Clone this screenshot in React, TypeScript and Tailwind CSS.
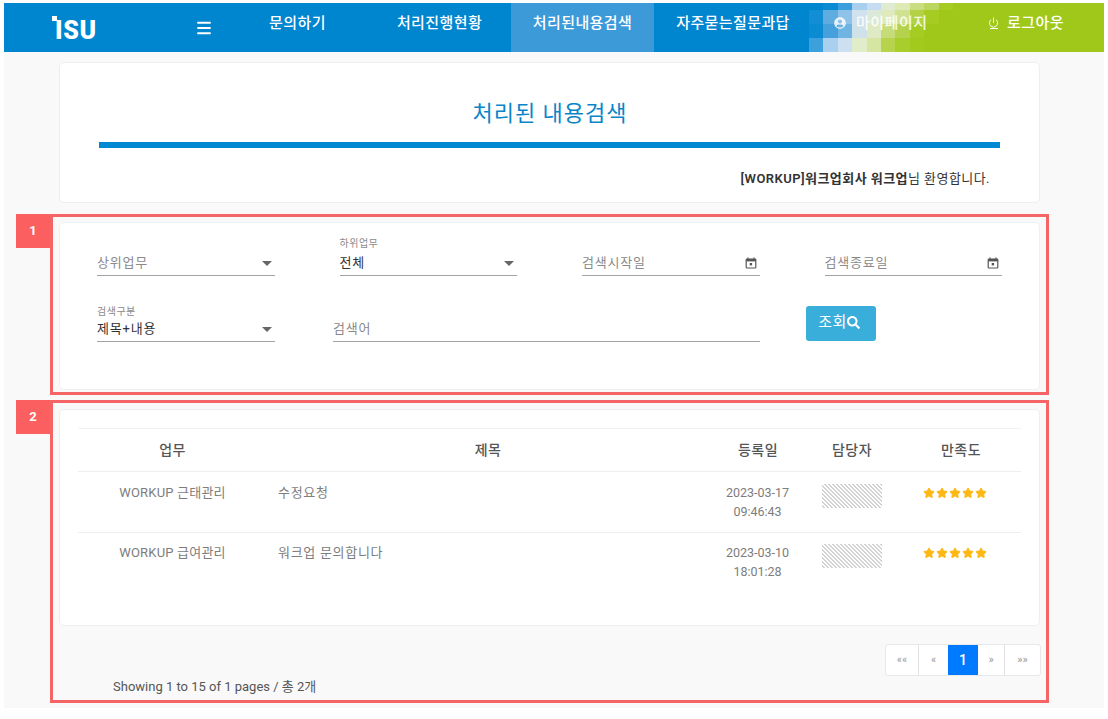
import { Menu, Power, Star } from "lucide-react";
import { FaSearch, FaUserCircle } from "react-icons/fa";

const navItems = ["문의하기", "처리진행현황", "처리된내용검색", "자주묻는질문과답"];
const navWidths = ["w-[141px]", "w-[143px]", "w-[143px]", "w-[158px]"];

// one row per line of the blue-to-green mosaic behind the menu's right end
const mosaic: string[][] = [
  ["#0085cf", "#0a8bd2", "#3a9fdc", "#a9cfee", "#c6dcf2", "#e0ecd0", "#dfe9b6", "#c9de80", "#bcd660", "#a6cc24", "#a0c81a"],
  ["#118ed4", "#5fade0", "#8fc2e8", "#cfe2ee", "#dce9d8", "#dfeabc", "#d0e290", "#b2d144", "#a6cc24", "#a0c81a", "#a0c81a"],
  ["#0a8bd2", "#46a0dc", "#6fb5e4", "#cfe2ea", "#dfe9c4", "#c6dc78", "#b5d24c", "#a5cc22", "#a0c81a", "#a0c81a", "#a0c81a"],
  ["#3ba0dc", "#a9d0ee", "#cde0f2", "#e1ecc8", "#d6e6a2", "#b6d34c", "#a8ce2c", "#a2ca1e", "#a0c81a", "#a0c81a", "#a0c81a"],
];

function CalendarIcon() {
  return (
    <svg viewBox="0 0 12 12" className="mb-[3px] mr-[3px] h-[12px] w-[12px] text-[#555]" fill="none">
      <path d="M3 0.5v2M9 0.5v2" stroke="currentColor" strokeWidth="1.2" />
      <rect x="1.2" y="2" width="9.6" height="9" rx="0.8" stroke="currentColor" strokeWidth="1.2" />
      <rect x="1.2" y="2" width="9.6" height="2.4" fill="currentColor" />
      <rect x="4.7" y="6" width="2.4" height="2.4" fill="currentColor" />
    </svg>
  );
}

function Field({
  label,
  value,
  icon,
  className,
}: {
  label?: string;
  value: string;
  icon?: "select" | "date";
  className: string;
}) {
  return (
    <div className={`relative flex h-[34px] items-end justify-between border-b border-[#a3a3a3] pb-[3px] ${className}`}>
      {label && (
        <span className="absolute left-0 top-[-3px] text-[10px] leading-none tracking-[0.5px] text-[#8a8a8a]">{label}</span>
      )}
      <span className={`text-[13px] leading-[18px] tracking-[0.8px] ${label ? "text-[#333]" : "text-[#8a8a8a]"}`}>{value}</span>
      {icon === "select" && (
        <span className="mb-[6px] mr-[3px] h-0 w-0 border-x-[5px] border-t-[5px] border-x-transparent border-t-[#666]" />
      )}
      {icon === "date" && <CalendarIcon />}
    </div>
  );
}

function Annotated({ n, className, children }: { n: number; className: string; children: React.ReactNode }) {
  return (
    <div className={`relative ml-[46px] w-[999px] border-[3px] border-[#f56565] px-[6px] ${className}`}>
      <span className="absolute left-[-37px] top-[-3px] flex h-[34px] w-[34px] items-center justify-center bg-[#fb5f5f] text-[13px] font-bold text-white">
        {n}
      </span>
      {children}
    </div>
  );
}

function Row({ task, title, date, time, top }: { task: string; title: string; date: string; time: string; top: string }) {
  return (
    <div className="flex h-[61px] border-t border-[#eeeeee] text-[13px] text-[#7d7d7d]">
      <div className={`w-[189px] text-center leading-[19px] tracking-[0.2px] ${top}`}>{task}</div>
      <div className={`w-[435px] pl-[11px] leading-[19px] tracking-[0.7px] ${top}`}>{title}</div>
      <div className={`w-[111px] text-center text-[12.5px] leading-[19px] ${top}`}>
        {date}
        <br />
        {time}
      </div>
      <div className={`w-[96px] pl-[9px] ${top}`}>
        <div className="mt-px h-[24px] w-[60px] bg-[repeating-linear-gradient(45deg,#ffffff_0px,#ffffff_1.4px,#d2d2d2_1.4px,#d2d2d2_2.8px)]" />
      </div>
      <div className={`w-[92px] ${top}`}>
        <div className="mt-[4px] flex justify-center gap-[1px]">
          {[0, 1, 2, 3, 4].map((i) => (
            <Star key={i} className="h-[12px] w-[12px] fill-[#fdb813] text-[#fdb813]" />
          ))}
        </div>
      </div>
    </div>
  );
}

export default function App() {
  return (
    <div
      className="h-[719px] w-[1108px] overflow-hidden bg-white pl-[4px] pt-[3px]"
      style={{ fontFamily: 'Roboto, "Noto Sans CJK KR", sans-serif' }}
    >
      <div className="h-[705px] w-[1100px] bg-[#f9f9f9]">
        <header className="relative flex h-[49px] bg-[linear-gradient(90deg,#0085cf_936px,#a0c81a_936px)] text-white">
          <svg className="absolute left-[805px] top-0 h-[49px] w-[159px]" viewBox="0 0 159 49" shapeRendering="crispEdges">
            {mosaic.map((row, r) =>
              row.map((fill, c) => (
                <rect key={`${r}-${c}`} x={c * 14.4} y={r === 0 ? 0 : 7 + (r - 1) * 14} width={14.5} height={r === 0 ? 7 : 14} fill={fill} />
              )),
            )}
          </svg>
          <div className="flex w-[191px] items-center pl-[51px]">
            <span className="relative mt-[6px] text-[25px] font-black leading-none tracking-[0.6px]">
              <span className="absolute left-[-3px] top-[-2px] h-[5px] w-[5px] bg-white" />
              ISU
            </span>
          </div>
          <div className="flex w-[32px] items-center">
            <Menu className="h-[18px] w-[18px]" strokeWidth={2.5} />
          </div>
          <nav className="relative flex text-[15px] font-medium tracking-[0.4px]">
            {navItems.map((item, i) => (
              <span
                key={item}
                className={`flex items-start justify-center pt-[11px] leading-[18px] ${i === 2 ? "bg-[#3d9ad9]" : ""} ${navWidths[i]}`}
              >
                {item}
              </span>
            ))}
          </nav>
          <span className="relative flex items-start gap-[10px] pl-[22px] pt-[11px] text-[15px] font-medium leading-[18px] tracking-[0.5px] text-white/85">
            <FaUserCircle className="mt-[3px] h-[12px] w-[12px]" />
            마이페이지
          </span>
          <div className="relative ml-auto flex w-[164px] items-start justify-center gap-[8px] pl-[8px] pt-[11px] text-[15px] font-medium leading-[18px] tracking-[0.4px]">
            <span className="mt-[3px] flex flex-col items-center">
              <Power className="h-[11px] w-[11px]" strokeWidth={2} />
              <span className="h-px w-[8px] bg-white" />
            </span>
            로그아웃
          </div>
        </header>

        <section className="ml-[55px] mt-[10px] h-[141px] w-[981px] rounded-[5px] border border-[#eeeeee] bg-white pt-[36px] text-center">
          <h1 className="pl-[1px] text-[22px] font-normal leading-[30px] tracking-[1px] text-[#0a85c9]">처리된 내용검색</h1>
          <div className="mx-[39px] mt-[13px] h-[6px] bg-[#0088d2]" />
          <p className="mr-[49px] mt-[22px] text-right text-[13px] leading-[18px] tracking-[0.45px] text-[#333]">
            <b className="font-semibold">[WORKUP]워크업회사 워크업</b>님 환영합니다.
          </p>
        </section>

        <Annotated n={1} className="mt-[11px] h-[181px] pt-[5px]">
          <div className="h-[168px] rounded-[5px] border border-[#f0f0f0] bg-white px-[37px] pt-[19px]">
            <div className="flex gap-[65px]">
              <Field value="상위업무" icon="select" className="w-[178px]" />
              <Field label="하위업무" value="전체" icon="select" className="w-[178px]" />
              <Field value="검색시작일" icon="date" className="w-[178px]" />
              <Field value="검색종료일" icon="date" className="w-[178px]" />
            </div>
            <div className="mt-[32px] flex items-start">
              <Field label="검색구분" value="제목+내용" icon="select" className="w-[178px] [&>span:first-child]:top-[-1px]" />
              <Field value="검색어" className="ml-[58px] w-[427px]" />
              <button className="ml-[46px] mt-[-2px] flex h-[35px] w-[70px] items-center justify-center rounded-[3px] bg-[#39aedb] pb-[2px] pr-[4px] text-[15px] tracking-[0.4px] text-white">
                조회
                <FaSearch className="h-[13px] w-[13px]" />
              </button>
            </div>
          </div>
        </Annotated>

        <Annotated n={2} className="mt-[5px] h-[303px] pt-[6px]">
          <div className="h-[217px] rounded-[5px] border border-[#eeeeee] bg-white px-[18px] pt-[18px]">
            <div className="flex h-[43px] items-center border-t border-[#f2f2f2] text-[14px] font-medium tracking-[0.4px] text-[#555]">
              <div className="w-[189px] text-center">업무</div>
              <div className="w-[442px] text-center">제목</div>
              <div className="w-[98px] text-center">등록일</div>
              <div className="w-[90px] text-center">담당자</div>
              <div className="w-[124px] pl-[4px] text-center">만족도</div>
            </div>
            <Row top="pt-[11px]" task="WORKUP 근태관리" title="수정요청" date="2023-03-17" time="09:46:43" />
            <Row top="pt-[10px]" task="WORKUP 급여관리" title="워크업 문의합니다" date="2023-03-10" time="18:01:28" />
          </div>
          <div className="mr-[-1px] mt-[18px] flex justify-end">
            <div className="flex h-[32px] overflow-hidden rounded-[3px] border border-[#e8e8e8] bg-white text-[11px] text-[#999]">
              <span className="flex w-[33px] items-center justify-center border-r border-[#e2e2e2]">««</span>
              <span className="flex w-[29px] items-center justify-center">«</span>
              <span className="flex w-[30px] items-center justify-center bg-[#007bff] text-[14px] font-medium text-white">1</span>
              <span className="flex w-[27px] items-center justify-center border-r border-[#e2e2e2]">»</span>
              <span className="flex w-[35px] items-center justify-center">»»</span>
            </div>
          </div>
          <p className="ml-[54px] mt-[2px] text-[13px] leading-[18px] text-[#555]">Showing 1 to 15 of 1 pages / 총 2개</p>
        </Annotated>
      </div>
    </div>
  );
}
